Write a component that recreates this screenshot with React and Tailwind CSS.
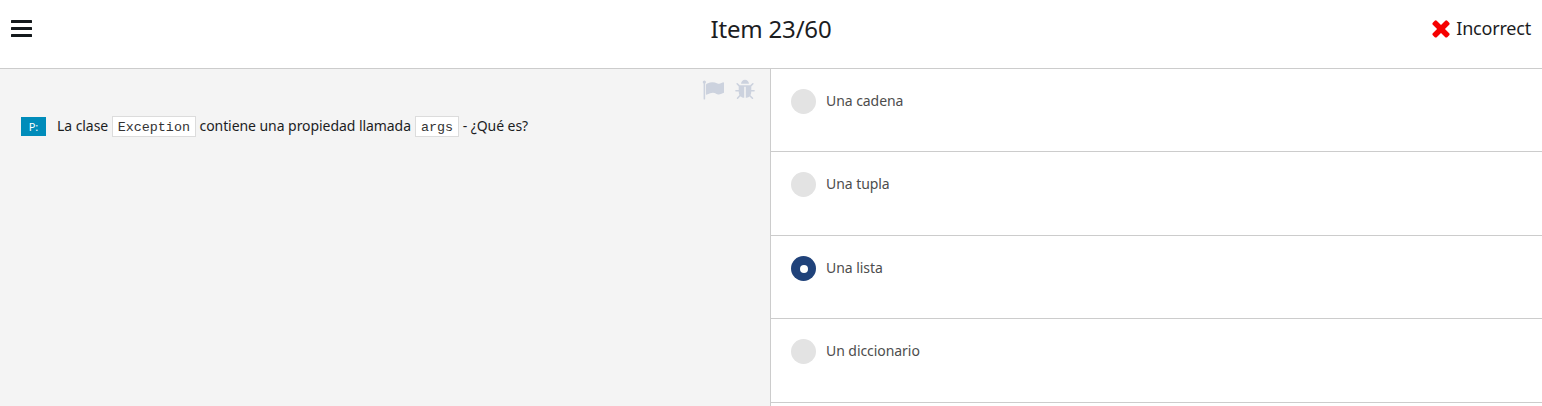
const options = [
  { label: 'Una cadena', height: 'h-[83px]' },
  { label: 'Una tupla', height: 'h-[84px]' },
  { label: 'Una lista', height: 'h-[83px]', selected: true },
  { label: 'Un diccionario', height: 'h-[84px]' },
];

function Icon({ d, className }) {
  return (
    <svg viewBox="0 0 1792 1792" fill="currentColor" className={className} aria-hidden="true">
      <path d={d} />
    </svg>
  );
}

const timesPath =
  'M1490 1322q0 40-28 68l-136 136q-28 28-68 28t-68-28l-294-294-294 294q-28 28-68 28t-68-28l-136-136q-28-28-28-68t28-68l294-294-294-294q-28-28-28-68t28-68l136-136q28-28 68-28t68 28l294 294 294-294q28-28 68-28t68 28l136 136q28 28 28 68t-28 68l-294 294 294 294q28 28 28 68z';
const flagPath =
  'M320 256q0 72-64 110v1266q0 13-9.5 22.5t-22.5 9.5h-64q-13 0-22.5-9.5t-9.5-22.5v-1266q-64-38-64-110 0-53 37.5-90.5t90.5-37.5 90.5 37.5 37.5 90.5zm1472 64v763q0 25-12.5 38.5t-39.5 27.5q-215 116-369 116-61 0-123.5-22t-108.5-48-115.5-48-142.5-22q-192 0-464 146-17 9-33 9-26 0-45-19t-19-45v-742q0-32 31-55 21-14 79-43 236-120 421-120 107 0 200 29t219 88q38 19 88 19 54 0 117.5-21t110-47 88-47 54.5-21q26 0 45 19t19 45z';
const bugPath =
  'M1696 960q0 26-19 45t-45 19h-224q0 171-67 290l208 209q19 19 19 45t-19 45q-18 19-45 19t-45-19l-198-197q-5 5-15 13t-42 28.5-65 36.5-82 29-97 13v-896h-128v896q-51 0-101.5-13.5t-87-33-66-39-43.5-32.5l-15-14-183 207q-20 21-48 21-24 0-43-16-19-18-20.5-44.5t15.5-46.5l202-227q-58-114-58-274h-224q-26 0-45-19t-19-45 19-45 45-19h224v-294l-173-173q-19-19-19-45t19-45 45-19 45 19l173 173h844l173-173q19-19 45-19t45 19 19 45-19 45l-173 173v294h224q26 0 45 19t19 45zm-480-576h-640q0-133 93.5-226.5t226.5-93.5 226.5 93.5 93.5 226.5z';

function Code({ children }) {
  return (
    <code className="mx-1 flex h-[21px] items-center border border-[#dcdcdc] bg-white px-[5px] pt-[3px] font-['Liberation_Mono',monospace] text-[13.4px] leading-none tracking-normal text-[#333]">
      {children}
    </code>
  );
}

export default function App() {
  return (
    <div className="flex h-[406px] w-[1542px] flex-col overflow-hidden bg-white font-['Noto_Sans','Open_Sans',sans-serif] text-[#1c1d1f]">
      <header className="grid h-[69px] shrink-0 grid-cols-3 border-b border-[#ccc]">
        <button aria-label="Menu" className="ml-[11px] mt-5 h-[17px] w-[21px]">
          <svg viewBox="0 0 21 17" className="block h-[17px] w-[21px]" fill="#14191c">
            <rect width="21" height="3" rx=".5" />
            <rect y="7" width="21" height="3" rx=".5" />
            <rect y="14" width="21" height="3" rx=".5" />
          </svg>
        </button>
        <h1 className="pt-[11px] text-center text-2xl leading-9 tracking-[-0.2px]">Item 23/60</h1>
        <div className="flex h-[57px] items-center justify-end pr-[11px] text-lg tracking-[-0.2px]">
          <Icon d={timesPath} className="-mt-0.5 mr-[2px] size-[26px] text-[#f60000]" />
          <span className="-mt-0.5">Incorrect</span>
        </div>
      </header>
      <main className="flex min-h-0 flex-1">
        <section className="h-full w-[771px] border-r border-[#ccc] bg-[#f4f4f4]">
          <div className="flex h-[47px] justify-end gap-[10px] pr-[14px] pt-[10px] text-[#ccd2de]">
            <Icon d={flagPath} className="size-[22px]" />
            <Icon d={bugPath} className="size-[22px]" />
          </div>
          <div className="flex h-[21px] items-center whitespace-pre pl-[21px] text-sm tracking-[-0.06px]">
            <span className="mr-[11px] flex h-[19px] w-[25px] items-center justify-center bg-[#008cba] text-[11px] text-white">P:</span>
            <span className="-mt-0.5 -mr-[0.5px]">La clase</span>
            <Code>Exception</Code>
            <span className="-mt-0.5 -ml-[0.5px]">contiene una propiedad llamada</span>
            <Code>args</Code>
            <span className="-mt-0.5 -ml-[0.5px]">- ¿Qué es?</span>
          </div>
        </section>
        <ul className="flex-1">
          {options.map((o) => (
            <li key={o.label} className={`flex items-start border-b border-[#ccc] pl-5 pt-5 ${o.height}`}>
              <span className={`flex size-[25px] items-center justify-center rounded-full ${o.selected ? 'bg-[#20427a]' : 'bg-[#e3e3e3]'}`}>
                {o.selected && <span className="size-2 rounded-full bg-white" />}
              </span>
              <span className="ml-[10px] text-sm leading-6 tracking-[-0.06px] text-[#4d4d4d]">{o.label}</span>
            </li>
          ))}
        </ul>
      </main>
    </div>
  );
}
